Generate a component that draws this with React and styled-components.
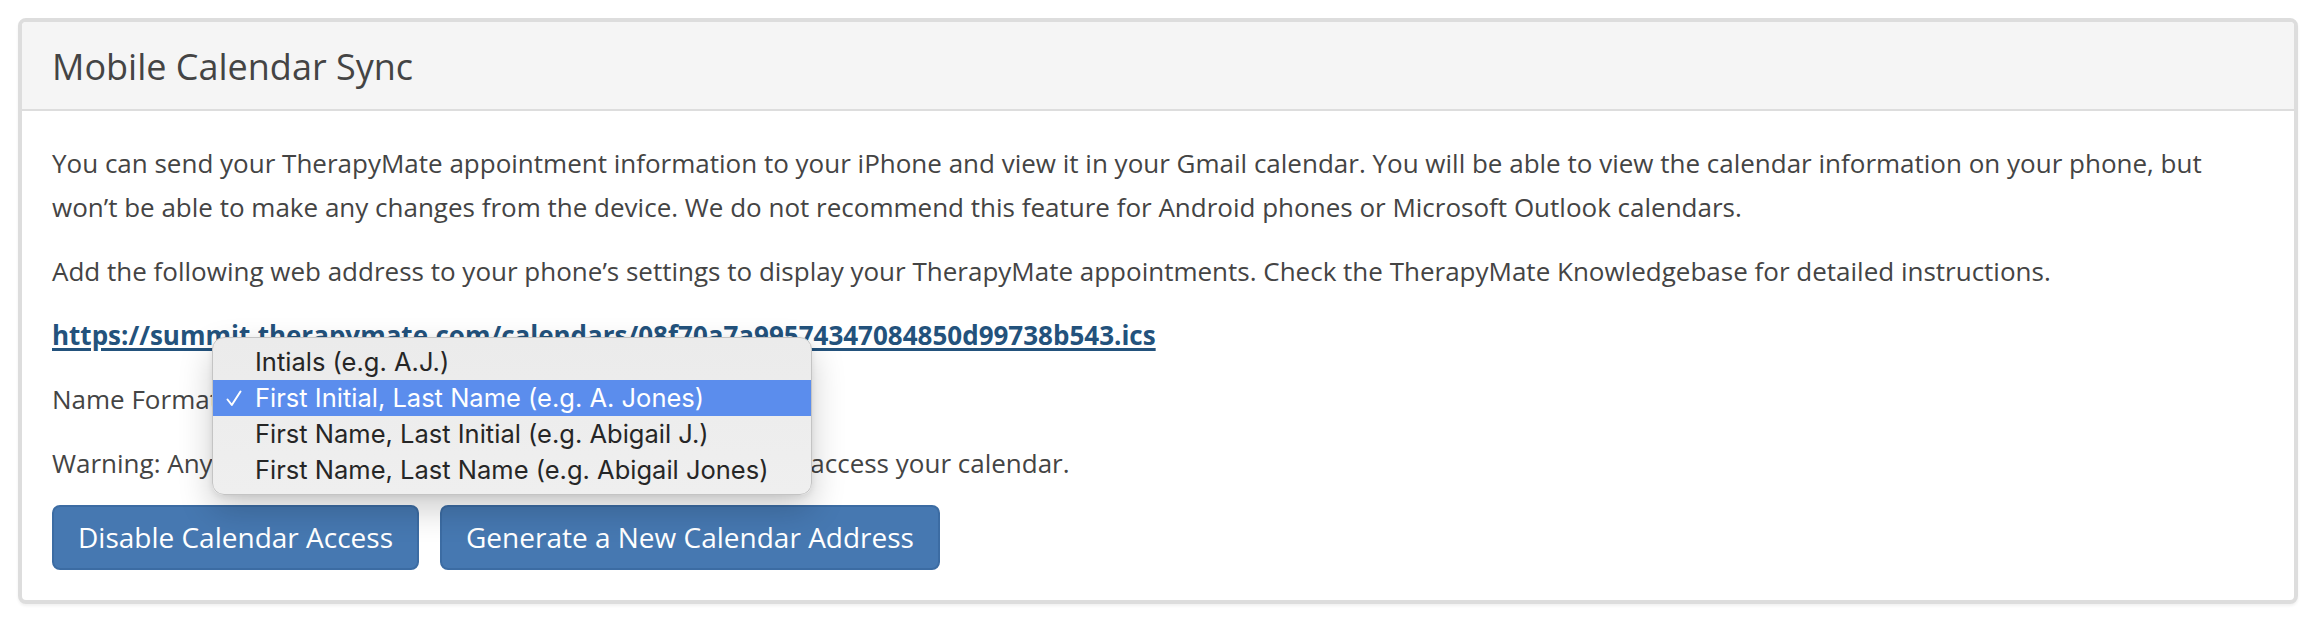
import React from 'react';
import styled, { createGlobalStyle } from 'styled-components';

const GlobalStyle = createGlobalStyle`
  html, body {
    margin: 0;
    padding: 0;
    background: #fff;
  }
  body {
    font-family: "Open Sans", "Liberation Sans", sans-serif;
    color: #444;
  }
  * { box-sizing: border-box; }
`;

const Page = styled.div`
  padding: 18px 24px 22px 18px;
`;

const Panel = styled.section`
  border: 4px solid #ddd;
  border-radius: 8px;
  background: #fff;
  box-shadow: 0 2px 3px rgba(0, 0, 0, 0.06);
`;

const PanelHeading = styled.header`
  background: #f5f5f5;
  border-bottom: 2px solid #ddd;
  border-radius: 4px 4px 0 0;
  padding: 20px 30px 18px;
`;

const PanelTitle = styled.h3`
  margin: 0;
  font-size: 36px;
  font-weight: 400;
  line-height: 49px;
  color: #444;
`;

const PanelBody = styled.div`
  padding: 30px;
  font-size: 26px;
  line-height: 44px;
`;

const Para = styled.p`
  margin: 0 0 20px;
  position: ${(p) => (p.$anchor ? 'relative' : 'static')};
`;

const CalendarLink = styled.a`
  color: #23527c;
  font-weight: 700;
  text-decoration: underline;
  text-decoration-thickness: 3px;
  text-underline-offset: 3px;
`;

const FakeSelect = styled.span`
  display: inline-block;
  vertical-align: middle;
  width: 520px;
  height: 36px;
  margin-left: 8px;
  border: 2px solid #ccc;
  border-radius: 8px;
  background: #fff;
`;

const Menu = styled.ul`
  position: absolute;
  z-index: 10;
  left: 160px;
  top: -40px;
  width: 600px;
  margin: 0;
  padding: 6px 0;
  list-style: none;
  background: linear-gradient(#ebebeb, #efefef);
  border: 1px solid #c4c4c4;
  border-radius: 12px;
  box-shadow: 0 14px 34px rgba(0, 0, 0, 0.2), 0 2px 6px rgba(0, 0, 0, 0.08);
  font-family: Inter, "Liberation Sans", sans-serif;
  font-size: 25.5px;
  line-height: 36px;
  color: #262626;
`;

const MenuItem = styled.li`
  position: relative;
  height: 36px;
  padding-left: 42px;
  white-space: nowrap;
  background: ${(p) => (p.$selected ? '#5b8ded' : 'transparent')};
  color: ${(p) => (p.$selected ? '#fff' : '#262626')};
`;

const Check = styled.svg`
  position: absolute;
  left: 13px;
  top: 10px;
  width: 16px;
  height: 17px;
`;

const ButtonRow = styled.div`
  display: flex;
  gap: 21px;
`;

const Button = styled.button`
  font-family: "Open Sans", "Liberation Sans", sans-serif;
  font-size: 28px;
  line-height: 37px;
  padding: 12px 24px;
  color: #fff;
  background: #4678b1;
  border: 2px solid #3c6ca3;
  border-radius: 8px;
  cursor: pointer;
`;

const options = [
  'Intials (e.g. A.J.)',
  'First Initial, Last Name (e.g. A. Jones)',
  'First Name, Last Initial (e.g. Abigail J.)',
  'First Name, Last Name (e.g. Abigail Jones)',
];

export default function App() {
  const selected = 1;
  return (
    <Page>
      <GlobalStyle />
      <Panel>
        <PanelHeading>
          <PanelTitle>Mobile Calendar Sync</PanelTitle>
        </PanelHeading>
        <PanelBody>
          <Para>
            You can send your TherapyMate appointment information to your iPhone and view it in your Gmail
            calendar. You will be able to view the calendar information on your phone, but won’t be able to
            make any changes from the device. We do not recommend this feature for Android phones or Microsoft
            Outlook calendars.
          </Para>
          <Para>
            Add the following web address to your phone’s settings to display your TherapyMate appointments.
            Check the TherapyMate Knowledgebase for detailed instructions.
          </Para>
          <Para>
            <CalendarLink href="#">
              https://summit.therapymate.com/calendars/08f70a7a99574347084850d99738b543.ics
            </CalendarLink>
          </Para>
          <Para $anchor>
            Name Format:
            <FakeSelect />
            <Menu>
              {options.map((o, i) => (
                <MenuItem key={o} $selected={i === selected}>
                  {i === selected && (
                    <Check viewBox="0 0 16 17">
                      <path d="M1.5 9.5 L5.8 15 L14.5 1.5" fill="none" stroke="#fff" strokeWidth="2" strokeLinecap="round" strokeLinejoin="round" />
                    </Check>
                  )}
                  {o}
                </MenuItem>
              ))}
            </Menu>
          </Para>
          <Para>
            Warning: Anyone that has this calendar address will be able to access your calendar.
          </Para>
          <ButtonRow>
            <Button>Disable Calendar Access</Button>
            <Button>Generate a New Calendar Address</Button>
          </ButtonRow>
        </PanelBody>
      </Panel>
    </Page>
  );
}
